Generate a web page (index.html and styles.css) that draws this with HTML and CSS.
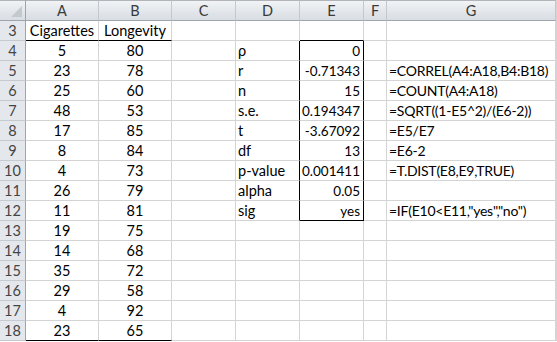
FILE: index.html
```html
<!DOCTYPE html>
<html lang="en">
<head>
  <meta charset="UTF-8">
  <title>Correlation test</title>
  <link rel="stylesheet" href="styles.css">
</head>
<body>
  <div class="sheet">
    <!-- column headers -->
    <div class="corner"></div>
    <div class="colhead">A</div>
    <div class="colhead">B</div>
    <div class="colhead">C</div>
    <div class="colhead">D</div>
    <div class="colhead">E</div>
    <div class="colhead">F</div>
    <div class="colhead">G</div>

    <!-- row 3 -->
    <div class="rowhead">3</div>
    <div class="cell center rule">Cigarettes</div>
    <div class="cell center rule">Longevity</div>
    <div class="cell"></div>
    <div class="cell"></div>
    <div class="cell box-top"></div>
    <div class="cell"></div>
    <div class="cell"></div>

    <div class="rowhead">4</div>
    <div class="cell center">5</div>
    <div class="cell center">80</div>
    <div class="cell"></div>
    <div class="cell label box-left">&rho;</div>
    <div class="cell num box-right">0</div>
    <div class="cell"></div>
    <div class="cell"></div>

    <div class="rowhead">5</div>
    <div class="cell center">23</div>
    <div class="cell center">78</div>
    <div class="cell"></div>
    <div class="cell label box-left">r</div>
    <div class="cell num box-right">-0.71343</div>
    <div class="cell"></div>
    <div class="cell label formula">=CORREL(A4:A18,B4:B18)</div>

    <div class="rowhead">6</div>
    <div class="cell center">25</div>
    <div class="cell center">60</div>
    <div class="cell"></div>
    <div class="cell label box-left">n</div>
    <div class="cell num box-right">15</div>
    <div class="cell"></div>
    <div class="cell label formula">=COUNT(A4:A18)</div>

    <div class="rowhead">7</div>
    <div class="cell center">48</div>
    <div class="cell center">53</div>
    <div class="cell"></div>
    <div class="cell label box-left">s.e.</div>
    <div class="cell num box-right">0.194347</div>
    <div class="cell"></div>
    <div class="cell label formula">=SQRT((1-E5^2)/(E6-2))</div>

    <div class="rowhead">8</div>
    <div class="cell center">17</div>
    <div class="cell center">85</div>
    <div class="cell"></div>
    <div class="cell label box-left">t</div>
    <div class="cell num box-right">-3.67092</div>
    <div class="cell"></div>
    <div class="cell label formula">=E5/E7</div>

    <div class="rowhead">9</div>
    <div class="cell center">8</div>
    <div class="cell center">84</div>
    <div class="cell"></div>
    <div class="cell label box-left">df</div>
    <div class="cell num box-right">13</div>
    <div class="cell"></div>
    <div class="cell label formula">=E6-2</div>

    <div class="rowhead">10</div>
    <div class="cell center">4</div>
    <div class="cell center">73</div>
    <div class="cell"></div>
    <div class="cell label box-left">p-value</div>
    <div class="cell num box-right">0.001411</div>
    <div class="cell"></div>
    <div class="cell label formula">=T.DIST(E8,E9,TRUE)</div>

    <div class="rowhead">11</div>
    <div class="cell center">26</div>
    <div class="cell center">79</div>
    <div class="cell"></div>
    <div class="cell label box-left">alpha</div>
    <div class="cell num box-right">0.05</div>
    <div class="cell"></div>
    <div class="cell"></div>

    <div class="rowhead">12</div>
    <div class="cell center">11</div>
    <div class="cell center">81</div>
    <div class="cell"></div>
    <div class="cell label box-left">sig</div>
    <div class="cell num box-right box-bottom">yes</div>
    <div class="cell"></div>
    <div class="cell label formula">=IF(E10&lt;E11,"yes","no")</div>

    <div class="rowhead">13</div>
    <div class="cell center">19</div>
    <div class="cell center">75</div>
    <div class="cell"></div><div class="cell"></div><div class="cell"></div><div class="cell"></div><div class="cell"></div>

    <div class="rowhead">14</div>
    <div class="cell center">14</div>
    <div class="cell center">68</div>
    <div class="cell"></div><div class="cell"></div><div class="cell"></div><div class="cell"></div><div class="cell"></div>

    <div class="rowhead">15</div>
    <div class="cell center">35</div>
    <div class="cell center">72</div>
    <div class="cell"></div><div class="cell"></div><div class="cell"></div><div class="cell"></div><div class="cell"></div>

    <div class="rowhead">16</div>
    <div class="cell center">29</div>
    <div class="cell center">58</div>
    <div class="cell"></div><div class="cell"></div><div class="cell"></div><div class="cell"></div><div class="cell"></div>

    <div class="rowhead">17</div>
    <div class="cell center">4</div>
    <div class="cell center">92</div>
    <div class="cell"></div><div class="cell"></div><div class="cell"></div><div class="cell"></div><div class="cell"></div>

    <div class="rowhead">18</div>
    <div class="cell center rule">23</div>
    <div class="cell center rule">65</div>
    <div class="cell"></div><div class="cell"></div><div class="cell"></div><div class="cell"></div><div class="cell"></div>
  </div>
</body>
</html>
```

FILE: styles.css
```css
body {
  margin: 0;
  background: #fff;
  font-family: Lato, "Open Sans", sans-serif;
  font-size: 14.5px;
  color: #000;
}

.sheet {
  display: grid;
  grid-template-columns: 26px 73px 73px 64px 64px 64px 23px 169px;
  grid-template-rows: 21px repeat(16, 20px);
  border-right: 1px solid #d4d4d4;
  width: max-content;
}

.sheet > div {
  box-sizing: border-box;
  border-right: 1px solid #d4d4d4;
  border-bottom: 1px solid #d4d4d4;
  display: flex;
  align-items: flex-end;
  padding-bottom: 1px;
  white-space: nowrap;
  overflow: visible;
}

.corner,
.colhead {
  background: linear-gradient(#f1f3f5, #dfe3e8 70%, #d9dee4);
  border-top: 1px solid #b1b5ba;
  border-bottom-color: #9fa4aa !important;
  border-right-color: #c3c8ce !important;
  color: #3a3a3a;
  justify-content: center;
  align-items: center !important;
}

.corner {
  position: relative;
  border-right-color: #9fa4aa !important;
}

/* small triangle in the select-all corner */
.corner::after {
  content: "";
  position: absolute;
  right: 3px;
  bottom: 3px;
  border-style: solid;
  border-width: 0 0 11px 11px;
  border-color: transparent transparent #c4c9cf transparent;
}

.rowhead {
  background: #e4e8ed;
  border-right-color: #9fa4aa !important;
  border-bottom-color: #c5cad0 !important;
  color: #444;
  justify-content: center;
}

.center {
  justify-content: center;
}

.label {
  padding-left: 2px;
}

/* caps in the formula text run wide, tighten them a little */
.formula {
  font-size: 14px;
  letter-spacing: -0.25px;
}

.num {
  justify-content: flex-end;
  padding-right: 3px;
  font-size: 13.5px;
}

.rule {
  border-bottom-color: #000 !important;
}

.box-top,
.box-bottom {
  border-bottom-color: #000 !important;
}

.box-left,
.box-right {
  border-right-color: #000 !important;
}
```
